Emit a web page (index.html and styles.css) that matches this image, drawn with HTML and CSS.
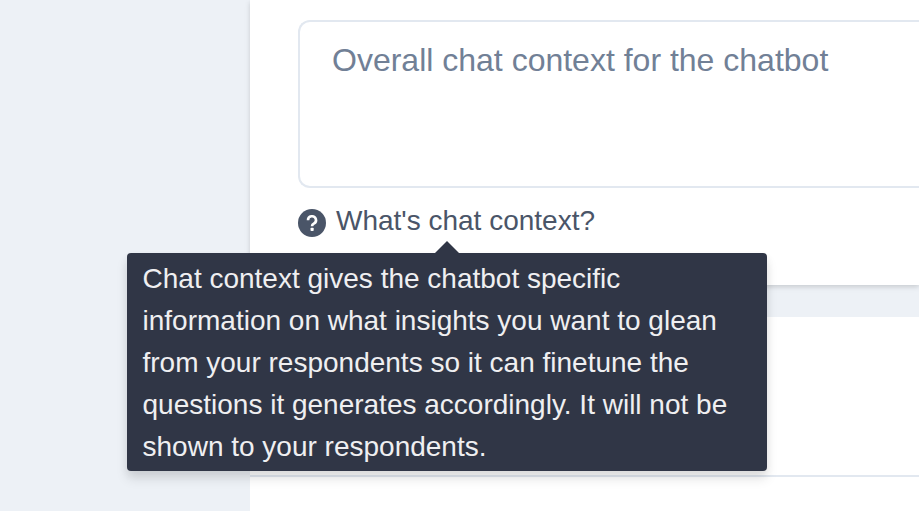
FILE: index.html
```html
<!DOCTYPE html>
<html lang="en">
<head>
  <meta charset="utf-8">
  <meta name="viewport" content="width=device-width, initial-scale=1">
  <title>Chat context</title>
  <link rel="stylesheet" href="styles.css">
</head>
<body>
  <main class="content">
    <section class="card card-context">
      <textarea class="context-input" aria-label="Chat context" placeholder="Overall chat context for the chatbot"></textarea>
      <div class="help">
        <button class="help-button" type="button" aria-describedby="context-tip">
          <svg class="help-icon" viewBox="0 0 28 28" aria-hidden="true">
            <circle cx="14" cy="14" r="14" fill="currentColor"/>
            <path d="M10 11.2a4 3.9 0 1 1 5.8 3.4q-1.8 1-1.8 2.6" fill="none" stroke="#fff" stroke-width="2.6"/>
            <rect x="12.5" y="18.8" width="3.2" height="3.2" rx="0.8" fill="#fff"/>
          </svg>
          <span>What's chat context?</span>
        </button>
        <div class="tooltip" id="context-tip" role="tooltip">Chat context gives the chatbot specific information on what insights you want to glean from your respondents so it can finetune the questions it generates accordingly. It will not be shown to your respondents.</div>
      </div>
    </section>
    <section class="card card-next">
      <div class="card-header"></div>
    </section>
  </main>
</body>
</html>
```
FILE: styles.css
```css
* {
  box-sizing: border-box;
}

body {
  margin: 0;
  min-height: 100vh;
  display: flex;
  overflow: hidden;
  background: #edf1f6;
  font-family: "Liberation Sans", Arial, sans-serif;
}

.content {
  flex: 1;
  min-width: 0;
  margin-left: 250px;
  display: flex;
  flex-direction: column;
  gap: 32px;
}

.card {
  background: #fff;
}

.card-context {
  position: relative;
  z-index: 1;
  padding: 20px 0 43px 48px;
  box-shadow: 0 2px 6px rgba(0, 0, 0, 0.1), 0 2px 4px rgba(0, 0, 0, 0.06);
}

.card-next {
  flex: 1;
}

.card-header {
  height: 160px;
  border-bottom: 2px solid #e2e8f0;
}

.context-input {
  display: block;
  width: 100%;
  height: 168px;
  padding: 16px 32px;
  border: 2px solid #e2e8f0;
  border-right: 0;
  border-radius: 12px 0 0 12px;
  background: #fff;
  color: #2d3748;
  font: 32px/44px "Liberation Sans", Arial, sans-serif;
  resize: none;
}

.context-input::placeholder {
  color: #718096;
  opacity: 1;
}

.help {
  position: relative;
  width: fit-content;
  margin-top: 12px;
}

.help-button {
  display: flex;
  align-items: center;
  gap: 10px;
  padding: 0;
  border: 0;
  background: none;
  color: #4a5568;
  font: 28px/42px "Liberation Sans", Arial, sans-serif;
}

.help-icon {
  width: 28px;
  height: 28px;
  margin-top: 4px;
}

.tooltip {
  position: absolute;
  top: calc(100% + 11px);
  left: 50%;
  width: 640px;
  padding: 5px 16px 3px;
  transform: translateX(-50%);
  border-radius: 4px;
  background: #303646;
  color: #efeff1;
  font-size: 28px;
  line-height: 42px;
  box-shadow: 0 8px 12px rgba(0, 0, 0, 0.1), 0 4px 8px rgba(0, 0, 0, 0.06);
}

.tooltip::before {
  content: "";
  position: absolute;
  top: -12px;
  left: calc(50% - 12px);
  border: 12px solid transparent;
  border-top: 0;
  border-bottom-color: #303646;
}
```
